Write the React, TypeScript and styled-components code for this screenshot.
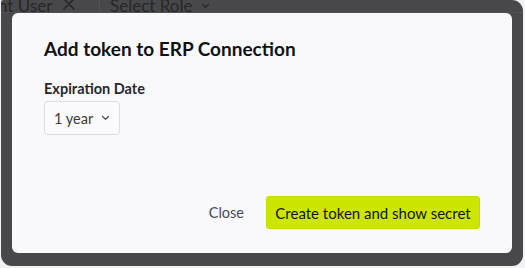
import React from "react";
import styled, { createGlobalStyle } from "styled-components";

const Global = createGlobalStyle`
  html, body { margin: 0; padding: 0; background: #f2f2f6; }
  body { font-family: Lato, "Open Sans", Arial, sans-serif; }
  * { box-sizing: border-box; }
`;

const Stage = styled.div`
  width: 525px;
  height: 268px;
  background: #f2f2f6;
  padding: 0 2px 2px 1px;
`;

const Window = styled.div`
  position: relative;
  width: 522px;
  height: 266px;
  background: #48484a;
  border-radius: 2px 11px 11px 11px;
  overflow: hidden;
`;

const HeaderRow = styled.div`
  display: flex;
  height: 13px;
  align-items: flex-end;
  border-bottom: 1px solid #525254;
`;

const HeaderCell = styled.div<{ $w: number; $divider?: boolean }>`
  width: ${(p) => p.$w}px;
  height: 13px;
  display: flex;
  align-items: center;
  gap: 9px;
  padding-left: ${(p) => (p.$divider ? 0 : 10)}px;
  border-right: ${(p) => (p.$divider ? "1px solid #555557" : "none")};
  overflow: hidden;
  color: #262628;
  font-size: 17px;
  line-height: 15px;
  white-space: nowrap;
`;

const CutText = styled.span<{ $shift: number }>`
  margin-left: ${(p) => p.$shift}px;
`;

const CloseIcon = styled.svg`
  flex: none;
  margin-left: 2px;
  margin-top: -4px;
`;

const Modal = styled.div`
  position: absolute;
  left: 11px;
  top: 13px;
  width: 500px;
  height: 240px;
  background: #f9f9fc;
  border-radius: 6px;
  display: flex;
  flex-direction: column;
  padding: 24px 32px 24px 32px;
`;

const Title = styled.h2`
  margin: 0;
  font-size: 19px;
  line-height: 24px;
  font-weight: 700;
  color: #111114;
  letter-spacing: 0;
`;

const Field = styled.div`
  margin-top: 19px;
  display: flex;
  flex-direction: column;
  align-items: flex-start;
`;

const Label = styled.label`
  font-size: 14.5px;
  line-height: 18px;
  font-weight: 700;
  color: #28282c;
  margin-bottom: 3px;
`;

const SelectBox = styled.button`
  height: 34px;
  width: 76px;
  display: flex;
  align-items: center;
  gap: 8px;
  padding: 0 0 0 9px;
  border: 1px solid #dcdce8;
  border-radius: 4px;
  background: #fbfbfe;
  font-family: inherit;
  font-size: 14.5px;
  color: #3a3a40;
`;

const Footer = styled.div`
  margin-top: auto;
  display: flex;
  justify-content: flex-end;
  align-items: center;
  gap: 22px;
`;

const GhostButton = styled.button`
  border: none;
  background: transparent;
  font-family: inherit;
  font-size: 14.5px;
  color: #4a4a52;
  padding: 0;
`;

const PrimaryButton = styled.button`
  height: 33px;
  width: 214px;
  border: 1px solid #c6dc00;
  border-radius: 3px;
  background: #cde600;
  font-family: inherit;
  font-size: 15px;
  color: #141414;
  padding: 0;
`;

const Chevron = ({ color = "#4a4a52" }: { color?: string }) => (
  <svg width="9" height="6" viewBox="0 0 9 6" fill="none">
    <path d="M1.5 1.5L4.5 4.3L7.5 1.5" stroke={color} strokeWidth="1.2" strokeLinecap="round" strokeLinejoin="round" />
  </svg>
);

export default function App() {
  return (
    <Stage>
      <Global />
      <Window>
        <HeaderRow>
          <HeaderCell $w={99} $divider>
            <CutText $shift={-3}>nt User</CutText>
            <CloseIcon width="12" height="12" viewBox="0 0 12 12" fill="none">
              <path d="M1 1L11 11M11 1L1 11" stroke="#262628" strokeWidth="1.6" strokeLinecap="round" />
            </CloseIcon>
          </HeaderCell>
          <HeaderCell $w={150}>
            <CutText $shift={0}>Select Role</CutText>
            <Chevron color="#262628" />
          </HeaderCell>
        </HeaderRow>
        <Modal>
          <Title>Add token to ERP Connection</Title>
          <Field>
            <Label>Expiration Date</Label>
            <SelectBox>
              1 year <Chevron />
            </SelectBox>
          </Field>
          <Footer>
            <GhostButton>Close</GhostButton>
            <PrimaryButton>Create token and show secret</PrimaryButton>
          </Footer>
        </Modal>
      </Window>
    </Stage>
  );
}
